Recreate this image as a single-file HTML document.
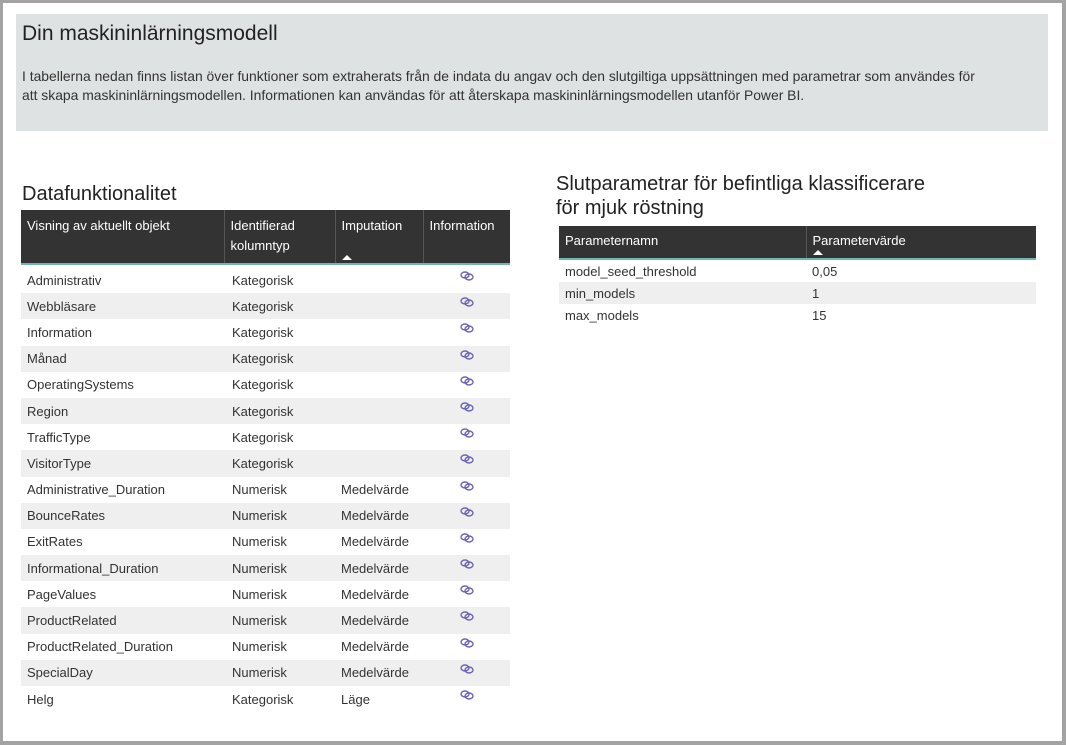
<!DOCTYPE html>
<html><head><meta charset="utf-8"><style>
*{margin:0;padding:0;box-sizing:border-box}
body{width:1066px;height:745px;background:#a3a3a3;font-family:"Liberation Sans",sans-serif;position:relative;overflow:hidden}
.page{position:absolute;left:3px;top:3px;width:1059px;height:738px;background:#fff}
.hdr{position:absolute;left:16px;top:14px;width:1032px;height:117px;background:#dfe2e2}
.hdr h1{position:absolute;left:6px;top:8px;font-weight:normal;font-size:21px;color:#222}
.hdr p{position:absolute;left:6px;top:53px;font-size:13.9px;line-height:19px;color:#333;width:1010px;white-space:nowrap}
h2{position:absolute;font-weight:normal;font-size:20px;color:#222;line-height:24px}
table{position:absolute;border-collapse:collapse;font-size:13px;color:#333}
th{background:#333;color:#fff;font-weight:normal;text-align:left;vertical-align:top;border-right:1px solid #555;border-bottom:2px solid #6fb7b0;padding:6px 6px;line-height:20px;position:relative}
td{padding:0 6px;white-space:nowrap}
tr.g td{background:#efefef}
.tri{position:absolute;left:6px;bottom:3px;width:0;height:0;border-left:5px solid transparent;border-right:5px solid transparent;border-bottom:5px solid #fff}
</style></head><body>
<div class="page"></div>
<div class="hdr"><h1>Din maskininlärningsmodell</h1>
<p>I tabellerna nedan finns listan över funktioner som extraherats från de indata du angav och den slutgiltiga uppsättningen med parametrar som användes för<br>att skapa maskininlärningsmodellen. Informationen kan användas för att återskapa maskininlärningsmodellen utanför Power BI.</p></div>
<h2 style="left:22px;top:182px">Datafunktionalitet</h2>
<table style="left:21px;top:210px;width:489px">
<tr style="height:54px"><th style="width:203px">Visning av aktuellt objekt</th><th style="width:111px">Identifierad kolumntyp</th><th style="width:88px">Imputation<span class="tri"></span></th><th style="width:87px;border-right:none">Information</th></tr>
</table>
<table id="t1" style="left:21px;top:267px;width:489px"></table>
<h2 style="left:556px;top:172px">Slutparametrar för befintliga klassificerare<br>för mjuk röstning</h2>
<table style="left:559px;top:226px;width:477px">
<tr style="height:33px"><th style="width:247px;padding-top:5px">Parameternamn</th><th style="border-right:none;padding-top:5px">Parametervärde<span class="tri"></span></th></tr>
<tr style="height:23px"><td>model_seed_threshold</td><td>0,05</td></tr>
<tr class="g" style="height:22px"><td>min_models</td><td>1</td></tr>
<tr style="height:22px"><td>max_models</td><td>15</td></tr>
</table>
<script>
var rows=[["Administrativ","Kategorisk",""],["Webbläsare","Kategorisk",""],["Information","Kategorisk",""],["Månad","Kategorisk",""],["OperatingSystems","Kategorisk",""],["Region","Kategorisk",""],["TrafficType","Kategorisk",""],["VisitorType","Kategorisk",""],["Administrative_Duration","Numerisk","Medelvärde"],["BounceRates","Numerisk","Medelvärde"],["ExitRates","Numerisk","Medelvärde"],["Informational_Duration","Numerisk","Medelvärde"],["PageValues","Numerisk","Medelvärde"],["ProductRelated","Numerisk","Medelvärde"],["ProductRelated_Duration","Numerisk","Medelvärde"],["SpecialDay","Numerisk","Medelvärde"],["Helg","Kategorisk","Läge"]];
var icon='<svg width="14" height="10" viewBox="0 0 14 10"><ellipse cx="5" cy="4" rx="4" ry="3" fill="none" stroke="#6b63b5" stroke-width="1.4"/><ellipse cx="9" cy="6" rx="4" ry="3" fill="none" stroke="#6b63b5" stroke-width="1.4"/></svg>';
var h="";rows.forEach(function(r,i){h+='<tr'+(i%2?' class="g"':'')+' style="height:26.2px"><td style="width:203px">'+r[0]+'</td><td style="width:111px;padding-left:8px">'+r[1]+'</td><td style="width:88px">'+r[2]+'</td><td style="text-align:center;vertical-align:top;padding-top:2px">'+icon+'</td></tr>';});
document.getElementById("t1").innerHTML=h;
</script>
</body></html>
